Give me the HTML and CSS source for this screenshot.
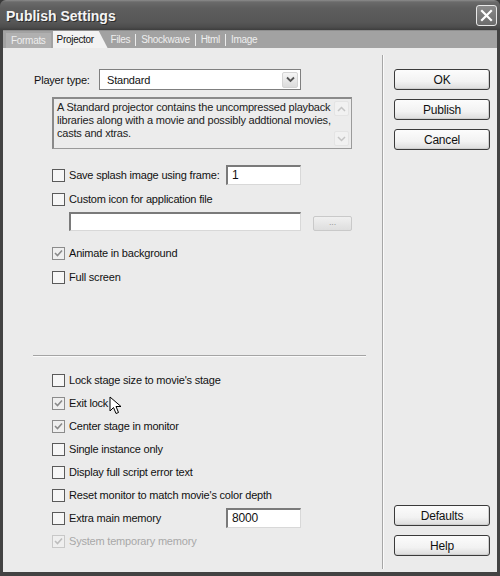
FILE: index.html
```html
<!DOCTYPE html>
<html>
<head>
<meta charset="utf-8">
<title>Publish Settings</title>
<link rel="stylesheet" href="styles.css">
</head>
<body>
<div class="window">
  <div class="titlebar">
    <span class="title">Publish Settings</span>
    <span class="close"><svg width="13" height="13" viewBox="0 0 13 13"><path d="M2 2 L11 11 M11 2 L2 11" stroke="#fff" stroke-width="2.2" stroke-linecap="square"/></svg></span>
  </div>
  <div class="tabstrip">
    <span class="tab tab-first">Formats</span>
    <span class="tab tab-active">Projector</span>
    <span class="tab">Files</span>
    <span class="sep"></span>
    <span class="tab">Shockwave</span>
    <span class="sep"></span>
    <span class="tab">Html</span>
    <span class="sep"></span>
    <span class="tab">Image</span>
  </div>
  <div class="main">
    <div class="left">
      <div class="player-row">
        <span class="player-label">Player type:</span>
        <div class="select">
          <span class="select-text">Standard</span>
          <span class="select-btn"><svg width="9" height="7" viewBox="0 0 9 7"><path d="M1 1.5 L4.5 5 L8 1.5" fill="none" stroke="#555" stroke-width="1.8"/></svg></span>
        </div>
      </div>
      <div class="desc">
        <div class="desc-text">A Standard projector contains the uncompressed playback libraries along with a movie and possibly addtional movies, casts and xtras.</div>
        <div class="desc-scroll">
          <span class="sbtn"><svg width="9" height="6" viewBox="0 0 9 6"><path d="M1 5 L4.5 1.5 L8 5" fill="none" stroke="#c4c4c4" stroke-width="1.5"/></svg></span>
          <span class="sbtn"><svg width="9" height="6" viewBox="0 0 9 6"><path d="M1 1 L4.5 4.5 L8 1" fill="none" stroke="#c4c4c4" stroke-width="1.5"/></svg></span>
        </div>
      </div>
      <div class="row r-splash">
        <span class="cb"></span><span class="lbl lbl-fixed">Save splash image using frame:</span>
        <span class="field field-small">1</span>
      </div>
      <div class="row r-custom">
        <span class="cb"></span><span class="lbl">Custom icon for application file</span>
      </div>
      <div class="file-row">
        <span class="field field-wide"></span>
        <span class="dots">...</span>
      </div>
      <div class="row r-animate">
        <span class="cb cb-on"><svg width="9" height="8" viewBox="0 0 9 8"><path d="M1 4 L3.5 6.5 L8 1.5" fill="none" stroke="#8a8a8a" stroke-width="1.6"/></svg></span><span class="lbl">Animate in background</span>
      </div>
      <div class="row r-full">
        <span class="cb"></span><span class="lbl">Full screen</span>
      </div>
      <div class="hr"></div>
      <div class="row r-lock">
        <span class="cb"></span><span class="lbl">Lock stage size to movie's stage</span>
      </div>
      <div class="row r-lo">
        <span class="cb cb-on"><svg width="9" height="8" viewBox="0 0 9 8"><path d="M1 4 L3.5 6.5 L8 1.5" fill="none" stroke="#8a8a8a" stroke-width="1.6"/></svg></span><span class="lbl">Exit lock</span>
        <span class="cursor"><svg width="14" height="20" viewBox="0 0 14 20"><path d="M1 1 L1 15 L4.5 11.5 L7 17.5 L9.5 16.5 L7 10.5 L12 10.5 Z" fill="#fff" stroke="#000" stroke-width="1" stroke-linejoin="miter"/></svg></span>
      </div>
      <div class="row r-lo">
        <span class="cb cb-on"><svg width="9" height="8" viewBox="0 0 9 8"><path d="M1 4 L3.5 6.5 L8 1.5" fill="none" stroke="#8a8a8a" stroke-width="1.6"/></svg></span><span class="lbl">Center stage in monitor</span>
      </div>
      <div class="row r-lo">
        <span class="cb"></span><span class="lbl">Single instance only</span>
      </div>
      <div class="row r-lo">
        <span class="cb"></span><span class="lbl">Display full script error text</span>
      </div>
      <div class="row r-lo">
        <span class="cb"></span><span class="lbl">Reset monitor to match movie's color depth</span>
      </div>
      <div class="row r-lo">
        <span class="cb"></span><span class="lbl lbl-fixed">Extra main memory</span>
        <span class="field field-small">8000</span>
      </div>
      <div class="row r-lo disabled">
        <span class="cb cb-on cb-dis"><svg width="9" height="8" viewBox="0 0 9 8"><path d="M1 4 L3.5 6.5 L8 1.5" fill="none" stroke="#bdbdbd" stroke-width="1.6"/></svg></span><span class="lbl">System temporary memory</span>
      </div>
    </div>
    <div class="divider"></div>
    <div class="right">
      <span class="btn">OK</span>
      <span class="btn">Publish</span>
      <span class="btn">Cancel</span>
      <span class="btn btn-defaults">Defaults</span>
      <span class="btn">Help</span>
    </div>
  </div>
</div>
</body>
</html>
```

FILE: styles.css
```css
* { box-sizing: border-box; }
html, body {
  margin: 0;
  padding: 0;
  background: #3a3a3a;
}
body {
  font-family: "Liberation Sans", Arial, sans-serif;
  font-size: 11px;
  letter-spacing: -0.2px;
  color: #111;
}
.window {
  width: 500px;
  height: 576px;
  display: flex;
  flex-direction: column;
  background: #434343;
  border-radius: 6px 6px 0 0;
  overflow: hidden;
}
.titlebar {
  height: 30px;
  flex: none;
  display: flex;
  align-items: center;
  justify-content: space-between;
  padding: 0 3px 0 6px;
  background: linear-gradient(#8c8c8c 0px, #6a6a6a 2px, #5e5e5e 8px, #575757 22px, #4d4d4d 27px, #3e3e3e 30px);
}
.title {
  font-size: 14px;
  font-weight: bold;
  letter-spacing: 0;
  color: #f4f4f4;
  text-shadow: 1px 1px 0 #2c2c2c;
  margin-top: 1px;
}
.close {
  width: 21px;
  height: 21px;
  border: 1px solid #e8e8e8;
  border-radius: 3px;
  background: linear-gradient(#8a8a8a, #6c6c6c);
  display: flex;
  align-items: center;
  justify-content: center;
  margin-top: 1px;
}
.tabstrip {
  height: 18px;
  flex: none;
  margin: 0 3px;
  background: #a2a2a2;
  display: flex;
  align-items: flex-end;
  padding-left: 3px;
  border-top: 1px solid #8e8e8e;
}
.tab {
  height: 16px;
  line-height: 15px;
  padding: 0 5px;
  color: #eeeeee;
  font-size: 10px;
  letter-spacing: -0.3px;
}
.tab-first {
  background: #b0b0b0;
  height: 15px;
  line-height: 15px;
  padding: 0 5px 0 5px;
  margin-right: 2px;
}
.tab-active {
  background: #f2f2f2;
  color: #111;
  padding: 0 9px 0 4px;
  height: 17px;
  line-height: 17px;
  clip-path: polygon(0 0, 84% 0, 100% 100%, 0 100%);
  width: 55px;
  margin-right: 0;
}
.tab-active + .tab {
  padding-left: 3px;
}
.sep {
  width: 1px;
  height: 12px;
  background: #ececec;
  margin-bottom: 2px;
}
.main {
  flex: 1;
  margin: 0 3px 4px 3px;
  background: #ebebeb;
  display: flex;
}
.left {
  width: 379px;
  padding-left: 31px;
  display: flex;
  flex-direction: column;
}
.player-row {
  margin-top: 21px;
  height: 21px;
  display: flex;
  align-items: center;
}
.player-label {
  width: 65px;
}
.select {
  width: 202px;
  height: 21px;
  border: 1px solid #7f7f7f;
  background: #fff;
  display: flex;
  align-items: center;
  justify-content: space-between;
  padding: 0 2px 0 7px;
}
.select-btn {
  width: 16px;
  height: 16px;
  border: 1px solid #d4d4d4;
  border-radius: 2px;
  background: linear-gradient(#f5f5f5, #dcdcdc);
  display: flex;
  align-items: center;
  justify-content: center;
}
.desc {
  margin: 7px 0 0 18px;
  width: 300px;
  height: 52px;
  border: 1px solid #9a9a9a;
  border-left: 2px solid #8a8a8a;
  border-top: 2px solid #8a8a8a;
  background: #ececec;
  display: flex;
}
.desc-text {
  flex: 1;
  padding: 2px 0 0 3px;
  line-height: 13px;
  color: #222;
}
.desc-scroll {
  width: 17px;
  display: flex;
  flex-direction: column;
  justify-content: space-between;
  padding: 2px 2px 2px 0;
}
.sbtn {
  width: 15px;
  height: 15px;
  border: 1px solid #e4e4e4;
  border-radius: 2px;
  background: #f1f1f1;
  display: flex;
  align-items: center;
  justify-content: center;
}
.row {
  height: 20px;
  display: flex;
  align-items: center;
  margin-left: 18px;
  position: relative;
}
.cb {
  width: 13px;
  height: 13px;
  border: 1px solid #5a5a5a;
  background: #f6f6f6;
  flex: none;
  display: flex;
  align-items: center;
  justify-content: center;
}
.cb-on {
  border-color: #8c8c8c;
  background: #efefef;
}
.cb-dis {
  border-color: #c8c8c8;
}
.lbl {
  margin-left: 4px;
  color: #111;
}
.lbl-fixed {
  width: 157px;
}
.disabled .lbl {
  color: #a8a8a8;
}
.field {
  height: 20px;
  background: #fff;
  border-top: 2px solid #7a7a7a;
  border-left: 2px solid #7a7a7a;
  border-right: 1px solid #d8d8d8;
  border-bottom: 1px solid #d8d8d8;
  padding-left: 4px;
  line-height: 17px;
  font-size: 12px;
  color: #111;
}
.field-small {
  width: 75px;
}
.r-splash { margin-top: 16px; }
.r-custom { margin-top: 4px; }
.file-row {
  margin: 3px 0 0 35px;
  height: 19px;
  display: flex;
  align-items: flex-end;
}
.field-wide {
  width: 232px;
  height: 19px;
}
.dots {
  margin-left: 12px;
  width: 39px;
  height: 15px;
  border: 1px solid #c9c9c9;
  border-radius: 2px;
  background: linear-gradient(#f0f0f0, #dedede);
  color: #9a9a9a;
  font-size: 9px;
  text-align: center;
  line-height: 10px;
}
.r-animate { margin-top: 12px; }
.r-full { margin-top: 4px; }
.hr {
  margin: 68px 0 0 -1px;
  width: 333px;
  height: 2px;
  border-top: 1px solid #a4a4a4;
  border-bottom: 1px solid #fafafa;
}
.r-lock { margin-top: 13px; }
.r-lo { margin-top: 3px; }
.cursor {
  position: absolute;
  left: 57px;
  top: 3px;
}
.divider {
  width: 2px;
  margin: 7px 0 3px;
  border-left: 1px solid #a6a6a6;
  border-right: 1px solid #fafafa;
}
.right {
  flex: 1;
  padding: 21px 0 16px 10px;
  display: flex;
  flex-direction: column;
}
.btn {
  width: 96px;
  height: 21px;
  border: 1px solid #3a3a3a;
  border-radius: 3px;
  background: linear-gradient(#fcfcfc, #f2f2f2 60%, #dcdcdc);
  box-shadow: inset -1px -1px 0 #cfcfcf;
  display: flex;
  align-items: center;
  justify-content: center;
  font-size: 12px;
  letter-spacing: -0.2px;
  color: #111;
  margin-bottom: 9px;
}
.btn:last-child { margin-bottom: 0; }
.btn-defaults { margin-top: auto; }
```
